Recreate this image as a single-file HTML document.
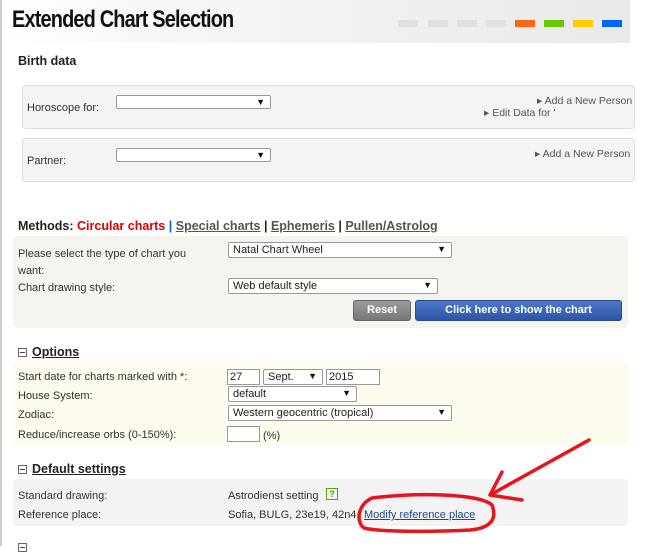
<!DOCTYPE html>
<html><head><meta charset="utf-8"><style>
*{margin:0;padding:0;box-sizing:border-box}
body{width:665px;height:546px;overflow:hidden;background:#fff;font-family:"Liberation Sans",sans-serif;font-size:11px;color:#333;position:relative}
.a{position:absolute;white-space:nowrap}
.t{margin-top:2px}
.hdr{left:2px;top:0;width:628px;height:43px;background:linear-gradient(90deg,#fff 0%,#f6f6f6 30%,#e9e9e9 100%)}
.sq{top:20px;width:20px;height:7px}
.box{position:absolute;border-radius:4px}
.sel{position:absolute;background:#fff;border:1px solid #999;border-radius:2px;height:16px;font-size:11px;padding:1px 4px;color:#222}
.sel:after{content:"▼";position:absolute;right:5px;top:1px;font-size:9px;color:#111}
.inp{position:absolute;background:#fff;border:1px solid #999;height:16px;padding:1px 2px;font-size:11px;color:#222}
.h{font-weight:bold;font-size:12.5px;color:#222}
.u{text-decoration:underline}
.mi{display:inline-block;width:9px;height:9px;border:1px solid #666;position:relative;top:0px;margin-right:5px;vertical-align:middle}
.mi:after{content:"";position:absolute;left:1px;top:3px;width:5px;height:1px;background:#444}
.lnk{color:#555;font-size:10.5px}
</style></head><body>
<div class="a" style="left:0;top:0;width:2px;height:546px;background:#ccc"></div>
<div class="a hdr"></div>
<div class="a" style="left:12px;top:6px;font-size:24px;font-weight:bold;color:#111;letter-spacing:-1px;transform:scaleX(.83);transform-origin:left">Extended Chart Selection</div>
<div class="a sq" style="left:398px;background:#e0e0e0"></div>
<div class="a sq" style="left:428px;background:#e0e0e0"></div>
<div class="a sq" style="left:457px;background:#e0e0e0"></div>
<div class="a sq" style="left:486px;background:#e0e0e0"></div>
<div class="a sq" style="left:515px;background:#ff6611"></div>
<div class="a sq" style="left:544px;background:#66cc00"></div>
<div class="a sq" style="left:573px;background:#ffcc00"></div>
<div class="a sq" style="left:602px;background:#0066ff"></div>

<div class="a h t" style="left:18px;top:52px">Birth data</div>
<div class="box" style="left:22px;top:85px;width:613px;height:44px;background:#f4f4f4;border:1px solid #ddd"></div>
<div class="a t" style="left:27px;top:100px">Horoscope for:</div>
<div class="sel" style="left:116px;top:95px;width:155px;height:14px"></div>
<div class="a lnk t" style="left:537px;top:93px">▸ Add a New Person</div>
<div class="a lnk t" style="left:484px;top:105px">▸ Edit Data for '</div>
<div class="box" style="left:22px;top:138px;width:613px;height:44px;background:#f4f4f4;border:1px solid #ddd"></div>
<div class="a t" style="left:27px;top:153px">Partner:</div>
<div class="sel" style="left:116px;top:148px;width:155px;height:14px"></div>
<div class="a lnk t" style="left:535px;top:146px">▸ Add a New Person</div>

<div class="a h t" style="left:18px;top:217px">Methods: <span style="color:#d00;font-weight:bold">Circular charts</span> <span style="color:#06c">|</span> <span class="u" style="color:#555">Special charts</span> | <span class="u" style="color:#555">Ephemeris</span> | <span class="u" style="color:#555">Pullen/Astrolog</span></div>
<div class="box" style="left:13px;top:236px;width:615px;height:92px;background:#f5f4ee"></div>
<div class="a t" style="left:18px;top:244px;line-height:17px">Please select the type of chart you<br>want:</div>
<div class="sel" style="left:228px;top:242px;width:224px">Natal Chart Wheel</div>
<div class="a t" style="left:18px;top:280px">Chart drawing style:</div>
<div class="sel" style="left:228px;top:278px;width:210px">Web default style</div>
<div class="a" style="left:353px;top:300px;width:58px;height:21px;background:linear-gradient(#9a9a9a,#777);border:1px solid #666;border-radius:3px;color:#fff;font-weight:bold;text-align:center;line-height:19px">Reset</div>
<div class="a" style="left:415px;top:300px;width:207px;height:21px;background:linear-gradient(#4d78c8,#2d55a6);border:1px solid #2a4a90;border-radius:3px;color:#fff;font-weight:bold;text-align:center;line-height:19px">Click here to show the chart</div>

<div class="a h t" style="left:18px;top:343px"><span class="mi"></span><span class="u">Options</span></div>
<div class="box" style="left:13px;top:361px;width:615px;height:85px;background:#fdfaee"></div>
<div class="a t" style="left:18px;top:369px">Start date for charts marked with *:</div>
<div class="inp" style="left:227px;top:369px;width:33px">27</div>
<div class="sel" style="left:263px;top:369px;width:60px">Sept.</div>
<div class="inp" style="left:326px;top:369px;width:54px">2015</div>
<div class="a t" style="left:18px;top:388px">House System:</div>
<div class="sel" style="left:228px;top:386px;width:129px">default</div>
<div class="a t" style="left:18px;top:407px">Zodiac:</div>
<div class="sel" style="left:228px;top:405px;width:224px">Western geocentric (tropical)</div>
<div class="a t" style="left:18px;top:427px">Reduce/increase orbs (0-150%):</div>
<div class="inp" style="left:227px;top:426px;width:33px"></div>
<div class="a t" style="left:263px;top:428px">(%)</div>

<div class="a h t" style="left:18px;top:460px"><span class="mi"></span><span class="u">Default settings</span></div>
<div class="box" style="left:13px;top:479px;width:615px;height:47px;background:#f4f3f3"></div>
<div class="a t" style="left:18px;top:488px">Standard drawing:</div>
<div class="a t" style="left:228px;top:488px">Astrodienst setting</div>
<div class="a" style="left:326px;top:488px;width:12px;height:12px;border:1px solid #5a0;color:#4a0;font-size:9px;font-weight:bold;text-align:center;line-height:10px">?</div>
<div class="a t" style="left:18px;top:507px">Reference place:</div>
<div class="a t" style="left:228px;top:507px">Sofia, BULG, 23e19, 42n4</div>
<div class="a u t" style="left:364px;top:507px;color:#1a4a8a">Modify reference place</div>
<div class="a h" style="left:18px;top:540px"><span class="mi"></span></div>

<svg class="a" style="left:0;top:0" width="665" height="546">
<path d="M372 498 C420 492 480 494 492 505 C497 518 492 528 470 530 C430 532 380 532 364 528 C356 522 357 505 372 498 Z" fill="none" stroke="#e8141c" stroke-width="3.5"/>
<path d="M589 440 L490 495 M490 495 L502 472 M490 495 L522 500" fill="none" stroke="#e8141c" stroke-width="3.5" stroke-linecap="round"/>
</svg>
</body></html>
